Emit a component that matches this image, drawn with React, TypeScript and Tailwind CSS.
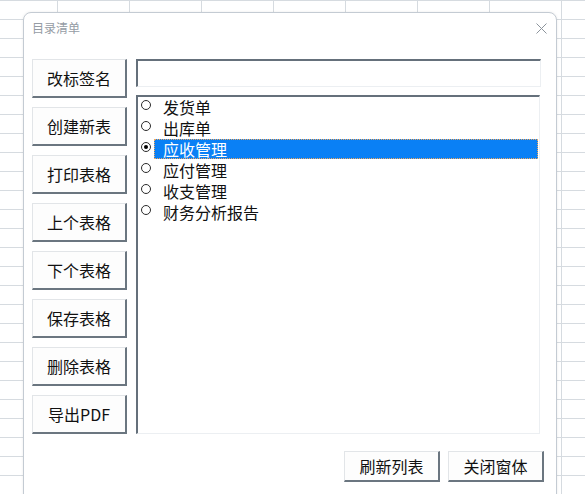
import React from "react";

const leftButtons = ["改标签名", "创建新表", "打印表格", "上个表格", "下个表格", "保存表格", "删除表格", "导出PDF"];
const items = ["发货单", "出库单", "应收管理", "应付管理", "收支管理", "财务分析报告"];

function Btn({ label, cls }: { label: string; cls: string }) {
  return (
    <div
      className={`${cls} flex items-center justify-center bg-[#fdfdfd] border-t border-l border-t-[#e2e5e8] border-l-[#e2e5e8] border-r-2 border-b-2 border-r-[#6b7680] border-b-[#6b7680] text-[16px] text-[#111111]`}
    >
      {label}
    </div>
  );
}

export default function App() {
  return (
    <div
      className="relative w-[585px] h-[494px] overflow-hidden bg-white bg-[linear-gradient(to_right,#d6dbe0_1px,transparent_1px),linear-gradient(to_bottom,#d6dbe0_1px,transparent_1px)] bg-[size:72px_19px] bg-[position:57px_0px]"
      style={{ fontFamily: '"Noto Sans CJK SC", "Noto Sans", sans-serif' }}
    >
      <div className="absolute left-[23px] top-[12px] w-[534px] h-[520px] rounded-[8px] border border-[#c4cbd3] bg-white shadow-[0_0_3px_rgba(0,0,0,0.08)] flex flex-col">
        {/* title bar */}
        <div className="h-[28px] flex items-center justify-between pl-[8px] pr-[9px] pt-[1px]">
          <span className="text-[12px] text-[#959ca4] leading-none">目录清单</span>
          <svg width="11" height="11" viewBox="0 0 11 11" className="mt-[1px]">
            <path d="M0.5 0.5 L10.5 10.5 M10.5 0.5 L0.5 10.5" stroke="#8c949c" strokeWidth="1" fill="none" />
          </svg>
        </div>
        {/* body */}
        <div className="mt-[18px] flex pl-[8px] gap-[9px]">
          <div className="flex flex-col gap-[9px]">
            {leftButtons.map((b) => (
              <Btn key={b} label={b} cls="w-[95px] h-[39px]" />
            ))}
          </div>
          <div className="w-[405px] flex flex-col gap-[8px]">
            <div className="h-[28px] bg-white border-t-2 border-l-2 border-t-[#65707b] border-l-[#65707b] border-r border-b border-r-[#eceff2] border-b-[#eceff2]" />
            <div className="h-[339px] w-[404px] bg-white border-t-2 border-l-2 border-t-[#65707b] border-l-[#65707b] border-r border-b border-r-[#eceff2] border-b-[#eceff2] pr-[1px]">
              {items.map((it, i) => {
                const sel = i === 2;
                return (
                  <div key={it} className="h-[21px] flex items-start pl-[3px]">
                    <div className="mt-[3px] w-[10px] h-[10px] rounded-full border-[1.5px] border-[#2b2b2b] bg-white flex items-center justify-center shrink-0">
                      {sel && <div className="w-[4px] h-[4px] rounded-full bg-black" />}
                    </div>
                    <div
                      className={
                        sel
                          ? "ml-[3px] flex-1 h-[20px] pl-[8px] bg-[#0a80f5] border border-dotted border-[#f0a860] text-white text-[16px] leading-[19px]"
                          : "ml-[3px] flex-1 h-[20px] pl-[9px] pt-[1px] text-[#111111] text-[16px] leading-[19px]"
                      }
                    >
                      {it}
                    </div>
                  </div>
                );
              })}
            </div>
          </div>
        </div>
        <div className="mt-[17px] flex justify-end gap-[8px] pr-[12px]">
          <Btn label="刷新列表" cls="w-[96px] h-[31px]" />
          <Btn label="关闭窗体" cls="w-[96px] h-[31px]" />
        </div>
      </div>
    </div>
  );
}
